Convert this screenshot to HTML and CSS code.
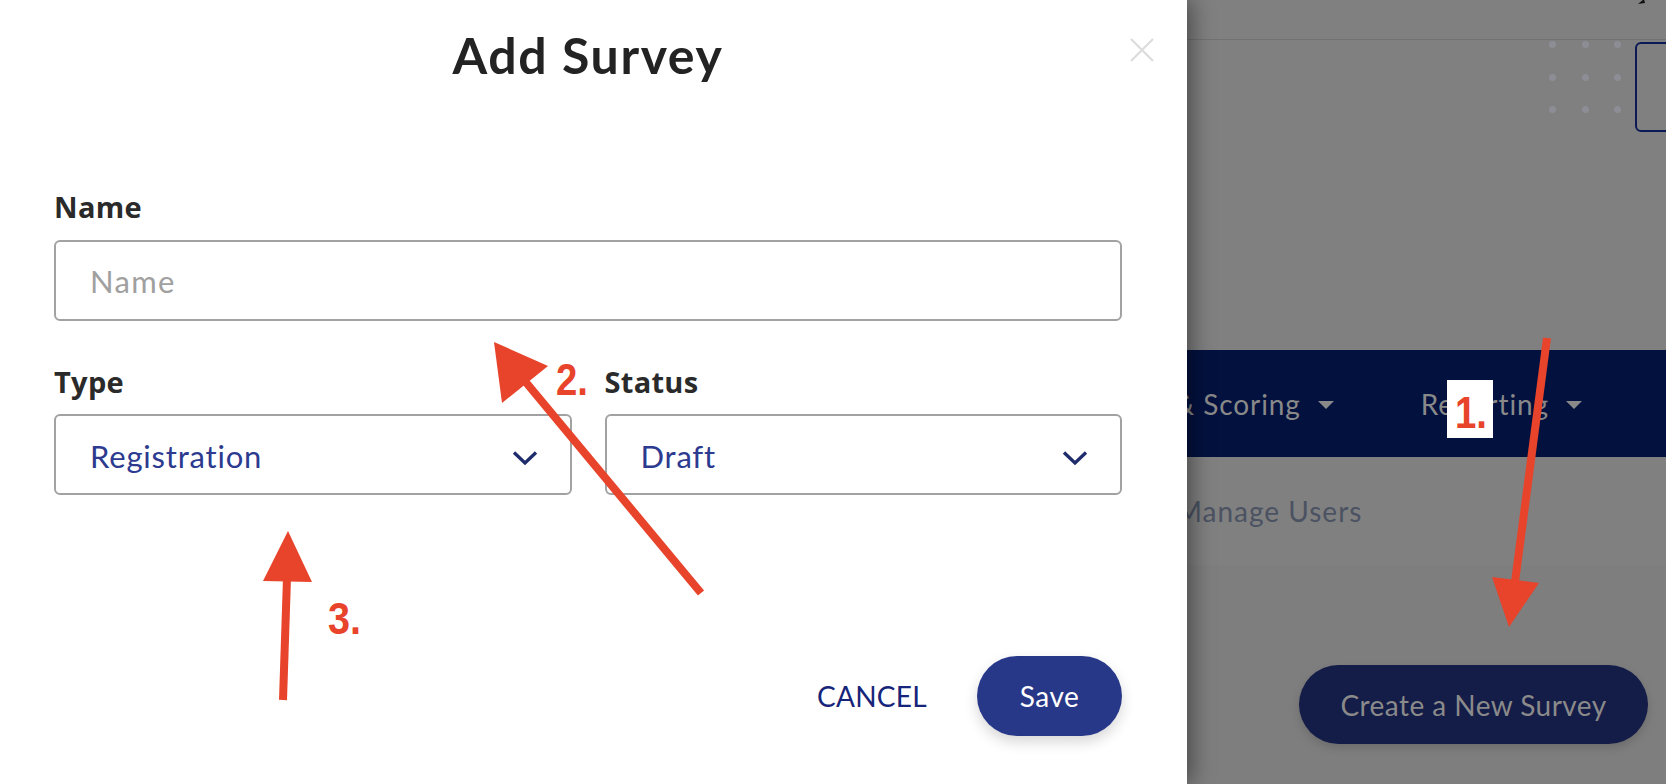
FILE: index.html
```html
<!DOCTYPE html>
<html lang="en">
<head>
<meta charset="utf-8">
<title>Add Survey</title>
<link rel="stylesheet" href="styles.css">
</head>
<body>
<div class="page">
  <header class="topbar">
    <svg class="corner-icon" width="30" height="8" viewBox="0 0 30 8"><path d="M2 6 L8 1 L9 5 Z" fill="#111"/><rect x="20" y="0" width="10" height="2" fill="#111"/></svg>
  </header>
  <section class="hero">
    <div class="dots">
      <span></span><span></span><span></span>
      <span></span><span></span><span></span>
      <span></span><span></span><span></span>
    </div>
    <div class="hero-box"></div>
  </section>
  <nav class="mainnav">
    <div class="nav-item">Judging &amp; Scoring<span class="caret"></span></div>
    <div class="nav-item">Reporting<span class="caret"></span></div>
  </nav>
  <div class="subnav">
    <span class="sub-item">Manage Users</span>
  </div>
  <div class="content">
    <button class="create-btn">Create a New Survey</button>
  </div>
</div>

<div class="modal">
  <h1 class="modal-title">Add Survey</h1>
  <svg class="close" width="24" height="24" viewBox="0 0 24 24"><path d="M1 1 L23 23 M23 1 L1 23" stroke="#dcdcdc" stroke-width="2.2" fill="none"/></svg>
  <form class="form">
    <label class="label">Name</label>
    <div class="field"><span class="placeholder">Name</span></div>
    <div class="row">
      <div class="col">
        <label class="label">Type</label>
        <div class="field select"><span class="value">Registration</span>
          <svg class="chev" width="26" height="16" viewBox="0 0 26 16"><polyline points="2,2.5 13,13 24,2.5" fill="none" stroke="#1f2c6c" stroke-width="3.3"/></svg>
        </div>
      </div>
      <div class="col">
        <label class="label">Status</label>
        <div class="field select"><span class="value">Draft</span>
          <svg class="chev" width="26" height="16" viewBox="0 0 26 16"><polyline points="2,2.5 13,13 24,2.5" fill="none" stroke="#1f2c6c" stroke-width="3.3"/></svg>
        </div>
      </div>
    </div>
    <div class="actions">
      <span class="cancel">CANCEL</span>
      <span class="save">Save</span>
    </div>
  </form>
</div>

<svg class="annotations" width="1666" height="784" viewBox="0 0 1666 784">
  <g stroke="#e8432b" stroke-width="8" fill="none">
    <line x1="1547" y1="338" x2="1515" y2="582"/>
    <line x1="701" y1="593" x2="524" y2="380"/>
    <line x1="283" y1="700" x2="287" y2="578"/>
  </g>
  <g fill="#e8432b">
    <polygon points="1509,627 1492,577 1539,583"/>
    <polygon points="494,342 502,403 548,366"/>
    <polygon points="288,531 263,581 312,582"/>
  </g>
  <rect x="1447" y="380" width="46" height="58" fill="#fff"/>
  <text x="1455" y="428" class="anno" textLength="32" lengthAdjust="spacingAndGlyphs">1.</text>
  <text x="556" y="395" class="anno" textLength="32" lengthAdjust="spacingAndGlyphs">2.</text>
  <text x="328" y="634" class="anno" textLength="33" lengthAdjust="spacingAndGlyphs">3.</text>
</svg>
</body>
</html>
```

FILE: styles.css
```css
* { box-sizing: border-box; }
html, body { margin: 0; padding: 0; }
body {
  width: 1666px;
  height: 784px;
  overflow: hidden;
  font-family: Lato, "Open Sans", Arial, sans-serif;
  background: #808080;
  position: relative;
}

/* background page (already dimmed) */
.page {
  width: 1666px;
  height: 784px;
  display: flex;
  flex-direction: column;
  overflow: hidden;
}
.topbar {
  height: 40px;
  border-bottom: 1px solid #727272;
  display: flex;
  justify-content: flex-end;
  align-items: flex-start;
  flex-shrink: 0;
}
.corner-icon { margin-top: -2px; }
.hero {
  height: 310px;
  display: flex;
  justify-content: flex-end;
  align-items: flex-start;
  gap: 14px;
  padding-top: 1px;
  flex-shrink: 0;
}
.dots {
  display: grid;
  grid-template-columns: repeat(3, 7px);
  grid-auto-rows: 7px;
  column-gap: 25.5px;
  row-gap: 25.5px;
}
.dots span {
  width: 7px;
  height: 7px;
  border-radius: 50%;
  background: #8c8d95;
}
.hero-box {
  width: 60px;
  height: 90px;
  margin-top: 1px;
  margin-right: -29px;
  border: 2px solid #0b1957;
  border-radius: 6px;
}
.mainnav {
  height: 107px;
  background: #03113f;
  display: flex;
  justify-content: flex-end;
  align-items: center;
  gap: 87px;
  padding-right: 84px;
  flex-shrink: 0;
}
.nav-item {
  color: #898989;
  font-size: 28px;
  display: flex;
  align-items: center;
  white-space: pre;
  letter-spacing: 0.9px;
}
.caret {
  display: inline-block;
  width: 0;
  height: 0;
  margin-left: 17px;
  margin-top: 3px;
  border-left: 8px solid transparent;
  border-right: 8px solid transparent;
  border-top: 8px solid #898989;
}
.subnav {
  height: 108px;
  display: flex;
  align-items: center;
  padding-left: 1176px;
  flex-shrink: 0;
  box-shadow: 0 2px 3px rgba(0,0,0,0.08);
}
.sub-item {
  color: #4b5262;
  font-size: 28px;
  letter-spacing: 1px;
}
.content {
  flex: 1;
  background: #7e7e7e;
  display: flex;
  justify-content: flex-end;
  align-items: flex-start;
  padding: 100px 18px 0 0;
}
.create-btn {
  width: 349px;
  height: 79px;
  border: none;
  border-radius: 40px;
  background: #141c48;
  color: #8a8a8a;
  font-family: Lato, Arial, sans-serif;
  font-size: 28px;
  letter-spacing: 0.45px;
  box-shadow: 0 4px 10px rgba(0,0,0,0.15);
}

/* modal */
.modal {
  position: absolute;
  left: 0;
  top: 0;
  width: 1187px;
  height: 784px;
  background: #fff;
  padding: 25px 65px 0 54px;
  box-shadow: 4px 0 22px rgba(0,0,0,0.45);
}
.modal-title {
  margin: 0;
  text-align: center;
  font-size: 50px;
  line-height: 60px;
  font-weight: 700;
  letter-spacing: 1.6px;
  color: #232323;
}
.close {
  position: absolute;
  left: 1130px;
  top: 38px;
}
.form {
  margin-top: 105px;
  display: flex;
  flex-direction: column;
}
.label {
  display: block;
  font-family: "Open Sans", Lato, Arial, sans-serif;
  font-size: 29px;
  line-height: 33.6px;
  font-weight: 700;
  letter-spacing: 0.3px;
  color: #2a2a2a;
  margin-bottom: 16px;
}
.field {
  height: 81px;
  border: 2px solid #a2a2a2;
  border-radius: 6px;
  display: flex;
  align-items: center;
  padding: 4px 32px 0 34px;
  font-size: 31px;
  line-height: 33.6px;
  letter-spacing: 0.8px;
}
.placeholder { color: #a0a0a0; font-weight: 400; letter-spacing: 1.3px; }
.row {
  display: grid;
  grid-template-columns: 1fr 1fr;
  column-gap: 33px;
  margin-top: 44px;
}
.select { justify-content: space-between; }
.chev { margin-top: 2px; }
.value { color: #2c3a8f; }
.actions {
  display: flex;
  justify-content: flex-end;
  align-items: center;
  gap: 50px;
  margin-top: 161px;
}
.cancel {
  color: #16247a;
  font-size: 28px;
  letter-spacing: 0.3px;
}
.save {
  width: 145px;
  height: 80px;
  border-radius: 40px;
  background: #283889;
  color: #fff;
  font-size: 28px;
  letter-spacing: 0.5px;
  display: flex;
  align-items: center;
  justify-content: center;
  box-shadow: 0 6px 14px rgba(0,0,0,0.16);
}

/* annotations */
.annotations {
  position: absolute;
  left: 0;
  top: 0;
  pointer-events: none;
}
.anno {
  font-family: "Liberation Sans", Arial, sans-serif;
  font-weight: 700;
  font-size: 44px;
  fill: #e8432b;
}
```
